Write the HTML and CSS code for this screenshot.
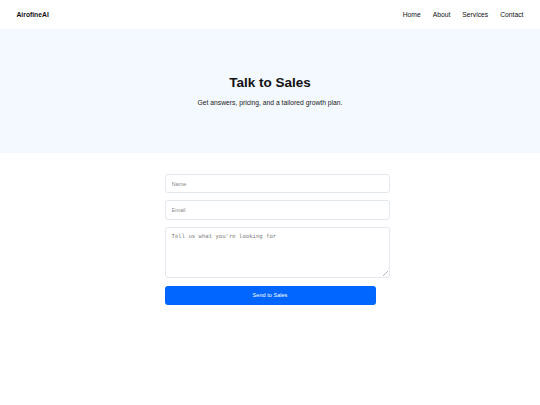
FILE: index.html
```html
<!DOCTYPE html>
<html lang="en">
<head>
<meta charset="utf-8">
<title>AirofineAI - Talk to Sales</title>
<link rel="stylesheet" href="styles.css">
</head>
<body>
<header class="site-header">
  <div class="logo">AirofineAI</div>
  <nav class="nav">
    <a href="#">Home</a>
    <a href="#">About</a>
    <a href="#">Services</a>
    <a href="#">Contact</a>
  </nav>
</header>
<section class="hero">
  <h1 class="hero-title">Talk to Sales</h1>
  <p class="hero-sub">Get answers, pricing, and a tailored growth plan.</p>
</section>
<main class="form-wrap">
  <form class="sales-form">
    <input class="field" type="text" placeholder="Name">
    <input class="field field-email" type="email" placeholder="Email">
    <textarea class="field-area" placeholder="Tell us what you're looking for"></textarea>
    <button class="submit" type="button">Send to Sales</button>
  </form>
</main>
</body>
</html>
```
FILE: styles.css
```css
* { margin: 0; }
html, body { background: #ffffff; }
body {
  margin: 0;
  font-family: "Liberation Sans", Arial, sans-serif;
  color: #111;
}
.site-header {
  height: 29px;
  padding: 0 16.5px;
  display: flex;
  align-items: center;
  justify-content: space-between;
  background: #ffffff;
}
.logo {
  font-weight: bold;
  font-size: 6.75px;
  color: #111;
}
.nav {
  display: flex;
  gap: 12px;
}
.nav a {
  font-size: 6.75px;
  color: #111;
  text-decoration: none;
}
.hero {
  background: #f4f8ff;
  padding: 45.9px 0;
  display: flex;
  flex-direction: column;
  align-items: center;
  gap: 7.9px;
}
.hero-title {
  font-size: 13.5px;
  line-height: 1.2;
  font-weight: bold;
  color: #111;
}
.hero-sub {
  font-size: 6.75px;
  line-height: 1.2;
  color: #222;
}
.form-wrap {
  padding-top: 21px;
  display: flex;
  justify-content: center;
}
.sales-form {
  width: 211px;
  display: flex;
  flex-direction: column;
  align-items: flex-start;
}
.field {
  display: block;
  width: 100%;
  height: 17.3px;
  padding: 0 6px;
  border: 1px solid #e3e8ef;
  border-radius: 3px;
  font-family: "Liberation Sans", Arial, sans-serif;
  font-size: 5.6px;
  color: #222;
  background: #fff;
  outline: none;
  margin-bottom: 7px;
}
.field-email { margin-bottom: 7.4px; }
.field::placeholder { color: #8a8a8a; }
.field-area::placeholder { color: #7a7a7a; }
.field-area {
  display: block;
  width: 100%;
  height: 38.6px;
  padding: 5px 6px;
  border: 1px solid #e3e8ef;
  border-radius: 3px;
  font-family: "DejaVu Sans Mono", monospace;
  font-size: 5.625px;
  resize: none;
  background-color: #fff;
  background-image:
    linear-gradient(135deg, transparent 46%, #b8b8b8 46%, #b8b8b8 56%, transparent 56%),
    linear-gradient(135deg, transparent 46%, #b8b8b8 46%, #b8b8b8 56%, transparent 56%);
  background-repeat: no-repeat;
  background-size: 5px 5px, 2.5px 2.5px;
  background-position: right 1px bottom 1px, right 1px bottom 1px;
  outline: none;
  margin-bottom: 8.4px;
}
.submit {
  width: 100%;
  height: 18.6px;
  border: none;
  border-radius: 3px;
  background: #0066ff;
  color: #fff;
  font-family: "Liberation Sans", Arial, sans-serif;
  font-size: 5.6px;
  cursor: pointer;
}
```
